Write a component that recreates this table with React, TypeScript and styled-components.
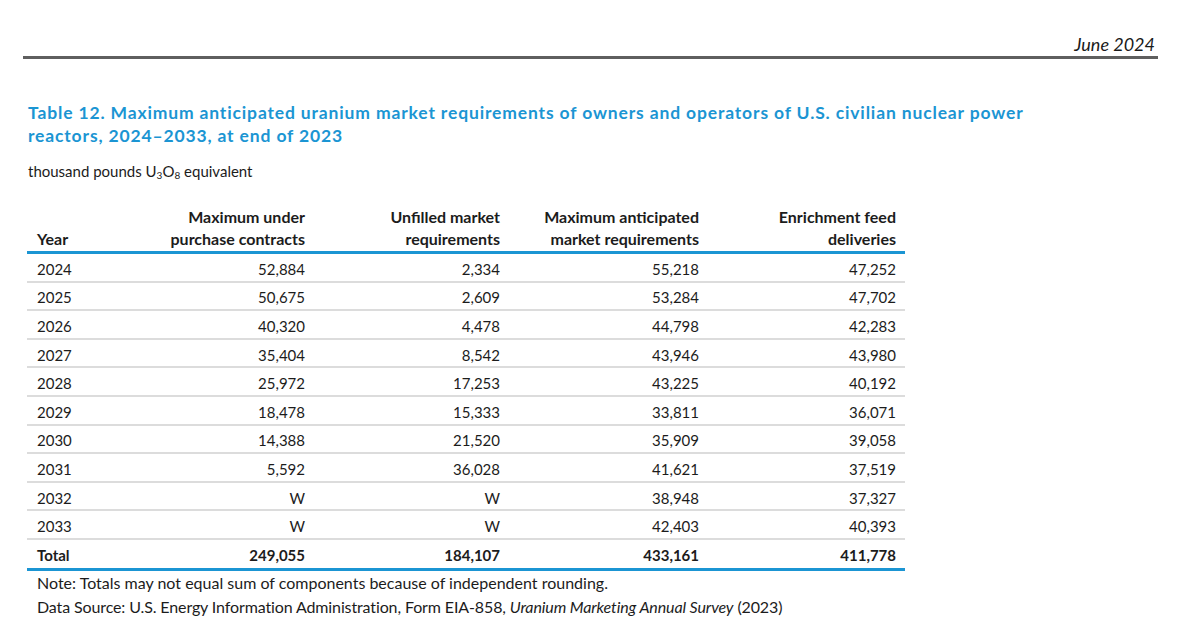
import styled, { createGlobalStyle } from "styled-components";

const GlobalStyle = createGlobalStyle`
    html, body {
        margin: 0;
        padding: 0;
        background: #ffffff;
    }
    body {
        font-family: Lato, "Open Sans", sans-serif;
        color: #1c1c1c;
    }
`

type Row = { year: string; values: string[] }

const rows: Row[] = [
    { year: "2024", values: ["52,884", "2,334", "55,218", "47,252"] },
    { year: "2025", values: ["50,675", "2,609", "53,284", "47,702"] },
    { year: "2026", values: ["40,320", "4,478", "44,798", "42,283"] },
    { year: "2027", values: ["35,404", "8,542", "43,946", "43,980"] },
    { year: "2028", values: ["25,972", "17,253", "43,225", "40,192"] },
    { year: "2029", values: ["18,478", "15,333", "33,811", "36,071"] },
    { year: "2030", values: ["14,388", "21,520", "35,909", "39,058"] },
    { year: "2031", values: ["5,592", "36,028", "41,621", "37,519"] },
    { year: "2032", values: ["W", "W", "38,948", "37,327"] },
    { year: "2033", values: ["W", "W", "42,403", "40,393"] },
]

const totals = ["249,055", "184,107", "433,161", "411,778"]

const headers: [string, string][] = [
    ["Maximum under", "purchase contracts"],
    ["Unfilled market", "requirements"],
    ["Maximum anticipated", "market requirements"],
    ["Enrichment feed", "deliveries"],
]

export default function App() {
    return (
        <Page>
            <GlobalStyle />
            <DateLine>June 2024</DateLine>
            <TopRule />
            <Title>
                Table 12. Maximum anticipated uranium market requirements of owners and operators of U.S. civilian nuclear power
                <br />
                reactors, 2024–2033, at end of 2023
            </Title>
            <Unit>thousand pounds U<sub>3</sub>O<sub>8</sub> equivalent</Unit>

            <Table>
                <HeadRow>
                    <HeadCell $left>Year</HeadCell>
                    {headers.map(([a, b]) => (
                        <HeadCell key={a}>{a}<br />{b}</HeadCell>
                    ))}
                </HeadRow>
                {rows.map((r) => (
                    <BodyRow key={r.year}>
                        <Cell $left>{r.year}</Cell>
                        {r.values.map((v, i) => (
                            <Cell key={i}>{v}</Cell>
                        ))}
                    </BodyRow>
                ))}
                <TotalRow>
                    <Cell $left>Total</Cell>
                    {totals.map((v) => (
                        <Cell key={v}>{v}</Cell>
                    ))}
                </TotalRow>
            </Table>

            <Footnote>Note: Totals may not equal sum of components because of independent rounding.</Footnote>
            <Footnote $tight>
                Data Source: U.S. Energy Information Administration, Form EIA-858, <i>Uranium Marketing Annual Survey</i> (2023)
            </Footnote>
        </Page>
    )
}

// styled components
const Page = styled.div`
    width: 1135px;
    padding: 34px 0 0 23px;
`

const DateLine = styled.div`
    text-align: right;
    font-style: italic;
    font-size: 18px;
    line-height: 20px;
    padding-right: 3px;
    color: #1a1a1a;
`

const TopRule = styled.div`
    height: 3px;
    background: #5f5f5f;
    margin-top: 2px;
`

const Title = styled.h1`
    margin: 42px 0 0 5px;
    font-size: 17.5px;
    line-height: 23px;
    font-weight: 700;
    color: #1b95d3;
    letter-spacing: 0.85px;
`

const Unit = styled.div`
    margin: 14px 0 0 5px;
    font-size: 15px;
    line-height: 20px;
    sub {
        font-size: 10px;
        vertical-align: -2px;
        line-height: 0;
    }
`

const Table = styled.div`
    width: 878px;
    margin: 25px 0 0 4px;
    font-size: 15px;
`

const Grid = styled.div`
    display: grid;
    grid-template-columns: 88px 180px 195px 199px 197px;
    padding: 0 9px 0 10px;
`

const HeadRow = styled(Grid)`
    font-weight: 700;
    font-size: 16px;
    line-height: 22px;
    padding-bottom: 1px;
    border-bottom: 3px solid #1b95d3;
    align-items: end;
`

const BodyRow = styled(Grid)`
    height: 28.6px;
    align-items: center;
    border-bottom: 2px solid #dcdcdc;
    box-sizing: border-box;
`

const TotalRow = styled(Grid)`
    height: 31px;
    align-items: center;
    font-weight: 700;
    border-bottom: 3px solid #1b95d3;
    box-sizing: border-box;
`

const HeadCell = styled.div<{ $left?: boolean }>`
    text-align: ${(p) => (p.$left ? "left" : "right")};
`

const Cell = styled.div<{ $left?: boolean }>`
    text-align: ${(p) => (p.$left ? "left" : "right")};
    padding-top: 3px;
`

const Footnote = styled.div<{ $tight?: boolean }>`
    margin-left: 14px;
    font-size: 16px;
    line-height: 24px;
    letter-spacing: ${(p) => (p.$tight ? "-0.12px" : "0")};
`
